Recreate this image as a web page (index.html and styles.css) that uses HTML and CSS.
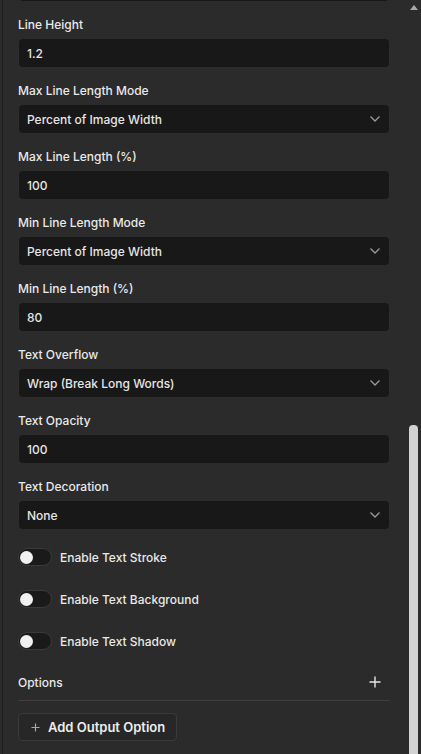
FILE: index.html
```html
<!DOCTYPE html>
<html lang="en">
<head>
<meta charset="utf-8">
<title>Text settings</title>
<link rel="stylesheet" href="styles.css">
</head>
<body>
<div class="panel">
  <div class="prev-tail"></div>
  <div class="fields">
    <div class="field">
      <div class="label">Line Height</div>
      <div class="input">1.2</div>
    </div>
    <div class="field">
      <div class="label">Max Line Length Mode</div>
      <div class="input select">Percent of Image Width<svg class="chev" viewBox="0 0 10 6"><path d="M0.5 0.5 L5 5 L9.5 0.5"/></svg></div>
    </div>
    <div class="field">
      <div class="label">Max Line Length (%)</div>
      <div class="input">100</div>
    </div>
    <div class="field">
      <div class="label">Min Line Length Mode</div>
      <div class="input select">Percent of Image Width<svg class="chev" viewBox="0 0 10 6"><path d="M0.5 0.5 L5 5 L9.5 0.5"/></svg></div>
    </div>
    <div class="field">
      <div class="label">Min Line Length (%)</div>
      <div class="input">80</div>
    </div>
    <div class="field">
      <div class="label">Text Overflow</div>
      <div class="input select">Wrap (Break Long Words)<svg class="chev" viewBox="0 0 10 6"><path d="M0.5 0.5 L5 5 L9.5 0.5"/></svg></div>
    </div>
    <div class="field">
      <div class="label">Text Opacity</div>
      <div class="input">100</div>
    </div>
    <div class="field">
      <div class="label">Text Decoration</div>
      <div class="input select">None<svg class="chev" viewBox="0 0 10 6"><path d="M0.5 0.5 L5 5 L9.5 0.5"/></svg></div>
    </div>
  </div>
  <div class="toggles">
    <div class="toggle-row"><span class="switch"><span class="knob"></span></span><span class="tlabel">Enable Text Stroke</span></div>
    <div class="toggle-row"><span class="switch"><span class="knob"></span></span><span class="tlabel">Enable Text Background</span></div>
    <div class="toggle-row"><span class="switch"><span class="knob"></span></span><span class="tlabel">Enable Text Shadow</span></div>
  </div>
  <div class="options-row">
    <span class="olabel">Options</span>
    <svg class="plus" viewBox="0 0 12 12"><path d="M6 0.5 V11.5 M0.5 6 H11.5"/></svg>
  </div>
  <div class="divider"></div>
  <button class="add-btn"><svg class="bplus" viewBox="0 0 10 10"><path d="M5 0.5 V9.5 M0.5 5 H9.5"/></svg><span>Add Output Option</span></button>
</div>
<div class="scrollbar">
  <div class="arrow"></div>
  <div class="thumb"></div>
</div>
</body>
</html>
```

FILE: styles.css
```css
html, body {
  margin: 0;
  padding: 0;
  height: 100%;
  overflow: hidden;
  background: #2b2b2b;
}
body {
  font-family: Inter, "Noto Sans", "Liberation Sans", sans-serif;
  color: #e8e8e8;
  position: relative;
}
.panel {
  margin-left: 2px;
  border-left: 1px solid #1f1f1f;
  height: 754px;
  padding: 0 32px 0 15px;
  display: flex;
  flex-direction: column;
}
.prev-tail {
  height: 28px;
  margin-top: -27px;
  margin-left: 1px;
  background: #181818;
  border-radius: 4px;
}
.fields {
  display: flex;
  flex-direction: column;
  gap: 16px;
  margin-top: 16px;
}
.field {
  display: flex;
  flex-direction: column;
}
.label {
  font-size: 12px;
  font-weight: 500;
  line-height: 16px;
  height: 16px;
  margin-bottom: 6px;
  color: #e9e9e9;
}
.input {
  height: 28px;
  margin-left: 1px;
  background: #181818;
  border-radius: 4px;
  padding: 0 9px 0 8px;
  display: flex;
  align-items: center;
  font-size: 12px;
  font-weight: 500;
  color: #e6e6e6;
}
.select {
  justify-content: space-between;
}
.chev {
  width: 10px;
  height: 6px;
  fill: none;
  stroke: #9a9a9a;
  stroke-width: 1.3;
}
.toggles {
  display: flex;
  flex-direction: column;
  gap: 24px;
  margin-top: 19px;
}
.toggle-row {
  display: flex;
  align-items: center;
  height: 18px;
}
.switch {
  box-sizing: border-box;
  width: 34px;
  height: 18px;
  border-radius: 9px;
  background: #1a1a1a;
  border: 1px solid #3a3a3a;
  display: flex;
  align-items: center;
  padding-left: 1px;
}
.knob {
  width: 13px;
  height: 13px;
  border-radius: 50%;
  background: #f2f2f2;
}
.tlabel {
  margin-left: 8px;
  font-size: 12px;
  font-weight: 500;
  color: #e9e9e9;
}
.options-row {
  display: flex;
  align-items: center;
  justify-content: space-between;
  height: 20px;
  margin-top: 22px;
  padding-right: 8px;
}
.olabel {
  font-size: 12px;
  font-weight: 500;
  color: #e9e9e9;
}
.plus {
  width: 12px;
  height: 12px;
  fill: none;
  stroke: #e6e6e6;
  stroke-width: 1.4;
}
.divider {
  height: 1px;
  background: #3e3e3e;
  margin-top: 8px;
}
.add-btn {
  align-self: flex-start;
  margin-top: 12px;
  height: 28px;
  box-sizing: border-box;
  padding: 0 11px 0 12px;
  background: #272727;
  border: 1px solid #3a3a3a;
  border-radius: 4px;
  display: flex;
  align-items: center;
  gap: 8px;
  font-family: inherit;
  font-size: 13px;
  font-weight: 600;
  color: #ededed;
}
.bplus {
  width: 9px;
  height: 9px;
  fill: none;
  stroke: #a8a8a8;
  stroke-width: 1.3;
}
.scrollbar {
  position: absolute;
  top: 0;
  right: 0;
  width: 12px;
  height: 754px;
  background: #2b2b2b;
}
.arrow {
  position: absolute;
  top: 5px;
  left: 1px;
  width: 0;
  height: 0;
  border-left: 4px solid transparent;
  border-right: 4px solid transparent;
  border-bottom: 5px solid #a8a8a8;
}
.thumb {
  position: absolute;
  top: 425px;
  left: 0;
  width: 9px;
  height: 340px;
  border-radius: 4px;
  background: #d2d2d2;
}
```
